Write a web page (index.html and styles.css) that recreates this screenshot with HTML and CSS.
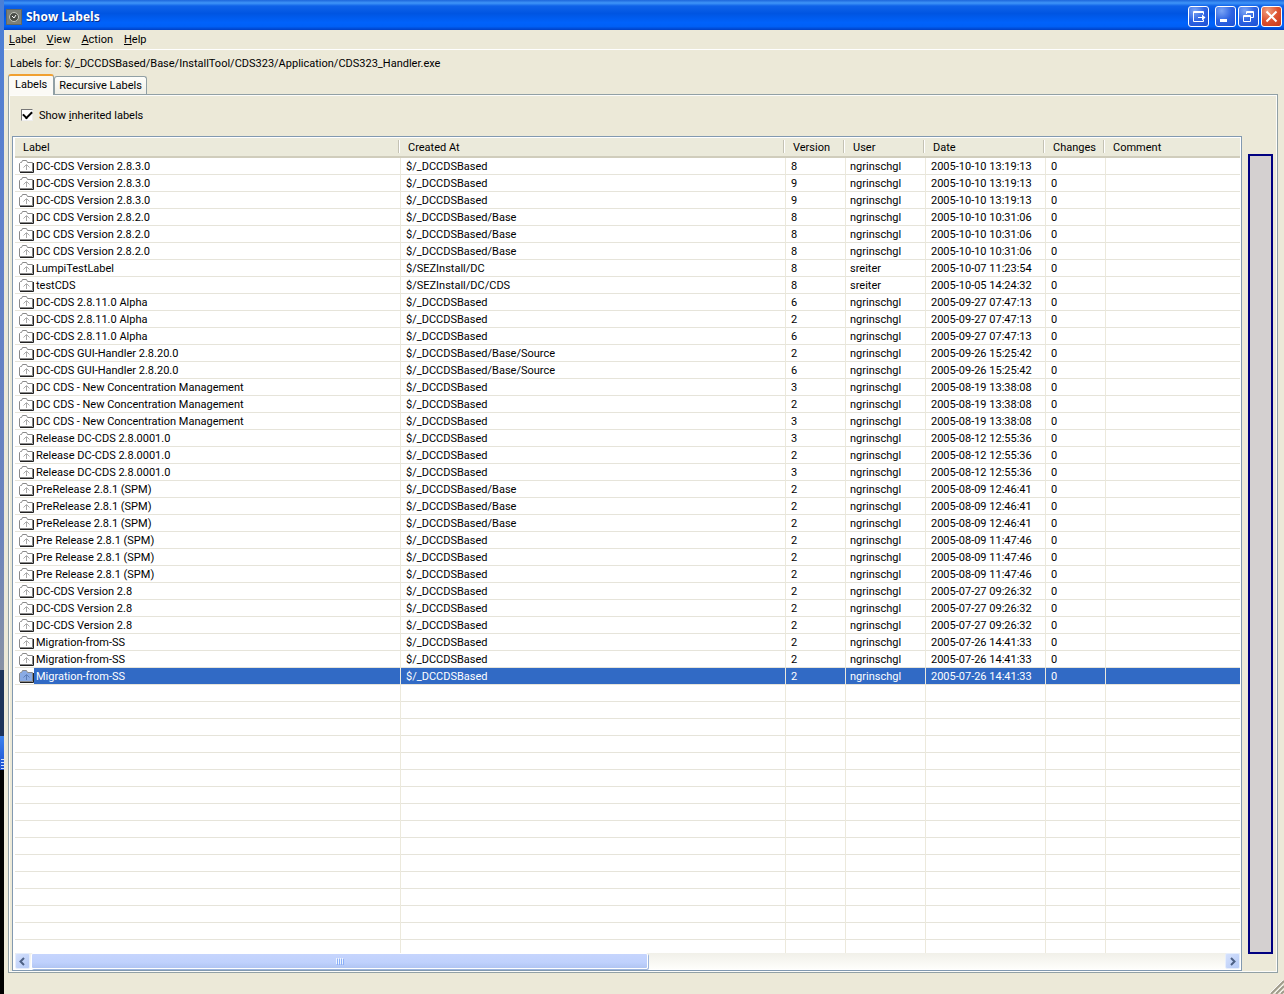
FILE: index.html
```
<!DOCTYPE html>
<html lang="en">
<head>
<meta charset="utf-8">
<title>Show Labels</title>
<link rel="stylesheet" href="styles.css">
</head>
<body>
<svg class="defs" aria-hidden="true">
  <symbol id="folder" viewBox="0 0 15 13">
    <path class="folder-shape" d="M.5 11.5v-8l1-1h1l1-2h4l1 2h5v9z"/>
    <path class="folder-edge" d="M14.5 3v9.500H1"/>
    <path class="folder-arrow" d="M7.500 10V5M4.500 7.500l3-3 3 3"/>
  </symbol>
</svg>
<div class="desktop">
  <div class="wallpaper"><div class="sky"></div><div class="sea"></div><div class="taskbar"></div><div class="dark"></div></div>
  <main class="window">
    <header class="titlebar">
      <svg class="app-icon" viewBox="0 0 16 16"><path fill="#7d8078" d="M0 0h16v16H0z"/><path d="M.5 .5h15v15H.5z" fill="none" stroke="#4c5148" stroke-dasharray="1 1"/><circle cx="8" cy="8" r="4.500" fill="#4a4e48" stroke="#c3c6be"/><path d="M6 7l2 2 2-3" stroke="#fff"/></svg>
      <h1>Show Labels</h1>
      <button class="cap spaced" type="button" aria-label="Move window"><svg viewBox="0 0 19 19"><path d="M14.500 7.500V4.500h-10v10h10V12.500M4 5.500h11M9 10.500h6"/><path class="solid" d="M13 7.500l3.500 3-3.500 3z"/></svg></button>
      <button class="cap" type="button" aria-label="Minimize"><svg viewBox="0 0 19 19"><path class="thick" d="M4 13.500h7"/></svg></button>
      <button class="cap" type="button" aria-label="Restore"><svg viewBox="0 0 19 19"><path d="M7.500 7V4.500h7v6H12M7 5.500h8M4.500 8.500h7v6h-7zM4 9.500h8"/></svg></button>
      <button class="cap close" type="button" aria-label="Close"><svg viewBox="0 0 19 19"><path class="cross" d="M4.500 4.500l10 10M14.500 4.500l-10 10"/></svg></button>
    </header>
    <nav class="menu">
      <button type="button"><u>L</u>abel</button>
      <button type="button"><u>V</u>iew</button>
      <button type="button"><u>A</u>ction</button>
      <button type="button"><u>H</u>elp</button>
    </nav>
    <p class="path">Labels for: $/_DCCDSBased/Base/InstallTool/CDS323/Application/CDS323_Handler.exe</p>
    <div class="tabs" role="tablist">
      <button type="button" role="tab" class="tab active" aria-selected="true">Labels</button>
      <button type="button" role="tab" class="tab" aria-selected="false">Recursive Labels</button>
    </div>
    <section class="panel">
      <label class="inherit"><input type="checkbox" checked><span>Show <u>i</u>nherited labels</span></label>
      <div class="content">
        <div class="list">
          <div class="rows">
          <table>
            <colgroup><col class="c-label"><col class="c-created"><col class="c-version"><col class="c-user"><col class="c-date"><col class="c-changes"><col></colgroup>
            <thead><tr><th>Label</th><th>Created At</th><th>Version</th><th>User</th><th>Date</th><th>Changes</th><th>Comment</th></tr></thead>
            <tbody>
<tr><td><svg><use href="#folder"/></svg><span>DC-CDS Version 2.8.3.0</span></td><td>$/_DCCDSBased</td><td>8</td><td>ngrinschgl</td><td>2005-10-10 13:19:13</td><td>0</td><td></td></tr>
<tr><td><svg><use href="#folder"/></svg><span>DC-CDS Version 2.8.3.0</span></td><td>$/_DCCDSBased</td><td>9</td><td>ngrinschgl</td><td>2005-10-10 13:19:13</td><td>0</td><td></td></tr>
<tr><td><svg><use href="#folder"/></svg><span>DC-CDS Version 2.8.3.0</span></td><td>$/_DCCDSBased</td><td>9</td><td>ngrinschgl</td><td>2005-10-10 13:19:13</td><td>0</td><td></td></tr>
<tr><td><svg><use href="#folder"/></svg><span>DC CDS Version 2.8.2.0</span></td><td>$/_DCCDSBased/Base</td><td>8</td><td>ngrinschgl</td><td>2005-10-10 10:31:06</td><td>0</td><td></td></tr>
<tr><td><svg><use href="#folder"/></svg><span>DC CDS Version 2.8.2.0</span></td><td>$/_DCCDSBased/Base</td><td>8</td><td>ngrinschgl</td><td>2005-10-10 10:31:06</td><td>0</td><td></td></tr>
<tr><td><svg><use href="#folder"/></svg><span>DC CDS Version 2.8.2.0</span></td><td>$/_DCCDSBased/Base</td><td>8</td><td>ngrinschgl</td><td>2005-10-10 10:31:06</td><td>0</td><td></td></tr>
<tr><td><svg><use href="#folder"/></svg><span>LumpiTestLabel</span></td><td>$/SEZInstall/DC</td><td>8</td><td>sreiter</td><td>2005-10-07 11:23:54</td><td>0</td><td></td></tr>
<tr><td><svg><use href="#folder"/></svg><span>testCDS</span></td><td>$/SEZInstall/DC/CDS</td><td>8</td><td>sreiter</td><td>2005-10-05 14:24:32</td><td>0</td><td></td></tr>
<tr><td><svg><use href="#folder"/></svg><span>DC-CDS 2.8.11.0 Alpha</span></td><td>$/_DCCDSBased</td><td>6</td><td>ngrinschgl</td><td>2005-09-27 07:47:13</td><td>0</td><td></td></tr>
<tr><td><svg><use href="#folder"/></svg><span>DC-CDS 2.8.11.0 Alpha</span></td><td>$/_DCCDSBased</td><td>2</td><td>ngrinschgl</td><td>2005-09-27 07:47:13</td><td>0</td><td></td></tr>
<tr><td><svg><use href="#folder"/></svg><span>DC-CDS 2.8.11.0 Alpha</span></td><td>$/_DCCDSBased</td><td>6</td><td>ngrinschgl</td><td>2005-09-27 07:47:13</td><td>0</td><td></td></tr>
<tr><td><svg><use href="#folder"/></svg><span>DC-CDS GUI-Handler 2.8.20.0</span></td><td>$/_DCCDSBased/Base/Source</td><td>2</td><td>ngrinschgl</td><td>2005-09-26 15:25:42</td><td>0</td><td></td></tr>
<tr><td><svg><use href="#folder"/></svg><span>DC-CDS GUI-Handler 2.8.20.0</span></td><td>$/_DCCDSBased/Base/Source</td><td>6</td><td>ngrinschgl</td><td>2005-09-26 15:25:42</td><td>0</td><td></td></tr>
<tr><td><svg><use href="#folder"/></svg><span>DC CDS - New Concentration Management</span></td><td>$/_DCCDSBased</td><td>3</td><td>ngrinschgl</td><td>2005-08-19 13:38:08</td><td>0</td><td></td></tr>
<tr><td><svg><use href="#folder"/></svg><span>DC CDS - New Concentration Management</span></td><td>$/_DCCDSBased</td><td>2</td><td>ngrinschgl</td><td>2005-08-19 13:38:08</td><td>0</td><td></td></tr>
<tr><td><svg><use href="#folder"/></svg><span>DC CDS - New Concentration Management</span></td><td>$/_DCCDSBased</td><td>3</td><td>ngrinschgl</td><td>2005-08-19 13:38:08</td><td>0</td><td></td></tr>
<tr><td><svg><use href="#folder"/></svg><span>Release DC-CDS 2.8.0001.0</span></td><td>$/_DCCDSBased</td><td>3</td><td>ngrinschgl</td><td>2005-08-12 12:55:36</td><td>0</td><td></td></tr>
<tr><td><svg><use href="#folder"/></svg><span>Release DC-CDS 2.8.0001.0</span></td><td>$/_DCCDSBased</td><td>2</td><td>ngrinschgl</td><td>2005-08-12 12:55:36</td><td>0</td><td></td></tr>
<tr><td><svg><use href="#folder"/></svg><span>Release DC-CDS 2.8.0001.0</span></td><td>$/_DCCDSBased</td><td>3</td><td>ngrinschgl</td><td>2005-08-12 12:55:36</td><td>0</td><td></td></tr>
<tr><td><svg><use href="#folder"/></svg><span>PreRelease 2.8.1 (SPM)</span></td><td>$/_DCCDSBased/Base</td><td>2</td><td>ngrinschgl</td><td>2005-08-09 12:46:41</td><td>0</td><td></td></tr>
<tr><td><svg><use href="#folder"/></svg><span>PreRelease 2.8.1 (SPM)</span></td><td>$/_DCCDSBased/Base</td><td>2</td><td>ngrinschgl</td><td>2005-08-09 12:46:41</td><td>0</td><td></td></tr>
<tr><td><svg><use href="#folder"/></svg><span>PreRelease 2.8.1 (SPM)</span></td><td>$/_DCCDSBased/Base</td><td>2</td><td>ngrinschgl</td><td>2005-08-09 12:46:41</td><td>0</td><td></td></tr>
<tr><td><svg><use href="#folder"/></svg><span>Pre Release 2.8.1 (SPM)</span></td><td>$/_DCCDSBased</td><td>2</td><td>ngrinschgl</td><td>2005-08-09 11:47:46</td><td>0</td><td></td></tr>
<tr><td><svg><use href="#folder"/></svg><span>Pre Release 2.8.1 (SPM)</span></td><td>$/_DCCDSBased</td><td>2</td><td>ngrinschgl</td><td>2005-08-09 11:47:46</td><td>0</td><td></td></tr>
<tr><td><svg><use href="#folder"/></svg><span>Pre Release 2.8.1 (SPM)</span></td><td>$/_DCCDSBased</td><td>2</td><td>ngrinschgl</td><td>2005-08-09 11:47:46</td><td>0</td><td></td></tr>
<tr><td><svg><use href="#folder"/></svg><span>DC-CDS Version 2.8</span></td><td>$/_DCCDSBased</td><td>2</td><td>ngrinschgl</td><td>2005-07-27 09:26:32</td><td>0</td><td></td></tr>
<tr><td><svg><use href="#folder"/></svg><span>DC-CDS Version 2.8</span></td><td>$/_DCCDSBased</td><td>2</td><td>ngrinschgl</td><td>2005-07-27 09:26:32</td><td>0</td><td></td></tr>
<tr><td><svg><use href="#folder"/></svg><span>DC-CDS Version 2.8</span></td><td>$/_DCCDSBased</td><td>2</td><td>ngrinschgl</td><td>2005-07-27 09:26:32</td><td>0</td><td></td></tr>
<tr><td><svg><use href="#folder"/></svg><span>Migration-from-SS</span></td><td>$/_DCCDSBased</td><td>2</td><td>ngrinschgl</td><td>2005-07-26 14:41:33</td><td>0</td><td></td></tr>
<tr><td><svg><use href="#folder"/></svg><span>Migration-from-SS</span></td><td>$/_DCCDSBased</td><td>2</td><td>ngrinschgl</td><td>2005-07-26 14:41:33</td><td>0</td><td></td></tr>
<tr class="selected"><td><svg><use href="#folder"/></svg><span>Migration-from-SS</span></td><td>$/_DCCDSBased</td><td>2</td><td>ngrinschgl</td><td>2005-07-26 14:41:33</td><td>0</td><td></td></tr>
<tr class="filler"><td></td><td></td><td></td><td></td><td></td><td></td><td></td></tr>
            </tbody>
          </table>
          </div>
          <div class="scrollbar">
            <button type="button" class="arrow" aria-label="Scroll left"><svg viewBox="0 0 13 13"><path d="M8 3L4.500 6.500 8 10"/></svg></button>
            <div class="track"><div class="thumb"><i></i><i></i><i></i><i></i></div></div>
            <button type="button" class="arrow" aria-label="Scroll right"><svg viewBox="0 0 13 13"><path d="M5 3l3.500 3.500L5 10"/></svg></button>
          </div>
        </div>
        <div class="gauge"></div>
      </div>
    </section>
    <footer class="status"><svg viewBox="0 0 14 14"><path stroke="#fff" d="M0 13L13 0M5 13l8-8M10 13l3-3"/><path stroke="#a09c8c" stroke-width="2" d="M1 14L14 1M6 14l8-8M11 14l3-3"/></svg></footer>
  </main>
</div>
</body>
</html>
```
FILE: styles.css
```
* { box-sizing: border-box; }
body {
  margin: 0;
  font: 11px/16px Roboto, "Liberation Sans", sans-serif;
  color: #000;
}
button { font: inherit; color: inherit; margin: 0; padding: 0; border: 0; background: none; }
svg { display: block; fill: none; }
.defs { display: none; }
.desktop { display: flex; min-height: 100vh; }

.wallpaper { width: 4px; display: flex; flex-direction: column; }
.sky { flex: 670; background: linear-gradient(#4a7fd6, #5f80cc 30%, #6b83bc 80%, #8791a4); }
.sea { flex: 66; background: #1c3359; }
.taskbar {
  flex: 34;
  background: repeating-linear-gradient(#cfe0ff 0 1px, transparent 1px 3px) bottom / 3px 11px no-repeat,
    linear-gradient(#3c83ee, #1c50d0);
}
.dark { flex: 224; background: #000; }

.window { flex: 1; min-width: 0; display: flex; flex-direction: column; background: #ece9d8; }
.titlebar {
  display: flex; align-items: center; gap: 2px; height: 30px; padding: 3px 2px 0 2px;
  background: linear-gradient(#1d66dc, #3f95f8 10%, #0f62e8 20%, #0055e2 45%, #0062fb 75%, #0060f6 88%, #0040c4);
}
.app-icon { width: 16px; height: 16px; }
.titlebar h1 {
  flex: 1; margin: 0 0 0 2px; color: #fff; text-shadow: 1px 1px #0a2f8c;
  font: bold 12px/16px "Open Sans", sans-serif;
}
.cap {
  width: 21px; height: 21px; border: 1px solid #fff; border-radius: 3px;
  background: radial-gradient(circle at 30% 20%, #7ba5f5, #2d63e2 50%, #1c4fd4);
}
.cap svg { width: 19px; height: 19px; stroke: #fff; }
.spaced { margin-right: 4px; }
.close { background: radial-gradient(circle at 30% 20%, #f0a080, #dd5230 50%, #c8381a); }
.cap .solid { fill: #fff; stroke: none; }
.thick { stroke-width: 3; }
.cross { stroke-width: 2; }

.menu {
  display: flex; gap: 11px; height: 20px; padding: 0 5px;
  border-bottom: 1px solid #fff;
}
.path { margin: 0; padding: 6px 6px 0; height: 24px; }

.tabs { display: flex; align-items: flex-end; padding-left: 4px; height: 20px; }
.tab {
  height: 18px; padding: 1px 4px 0; border: 1px solid #91a0a5; border-bottom: 0;
  border-radius: 3px 3px 0 0; background: linear-gradient(#fefefb, #f0efe6);
}
.tab.active {
  position: relative; height: 21px; margin-bottom: -1px; padding: 0 6px 2px;
  border-top: 2px solid #f0a030; background: #fbfaf6;
}
.panel {
  flex: 1; display: flex; flex-direction: column; margin: 0 6px 0 4px; padding: 0 4px 1px 3px;
  border: 1px solid #91a0a5; box-shadow: inset 0 0 0 1px #fcfcfa;
}
.inherit { display: flex; align-items: center; gap: 6px; height: 40px; padding-left: 9px; align-self: flex-start; }
.inherit span { padding-top: 1px; }
.inherit input {
  appearance: none; width: 12px; height: 12px; margin: 0; background: #fff;
  border: 1px solid #777; border-right-color: #eee; border-bottom-color: #eee;
  display: grid; place-items: center;
}
.inherit input:checked::after {
  content: ""; width: 7px; height: 4px; border: solid #000; border-width: 0 0 2px 2px; rotate: -45deg; margin-bottom: 2px;
}
.content { flex: 1; display: flex; gap: 6px; }
.list {
  flex: 1; min-width: 0; margin-top: 1px; display: flex; flex-direction: column; padding: 1px 1px 1px 2px;
  border: 1px solid #8299b0; background: #fff;
}
.rows { flex: 1; display: grid; }
table { width: 100%; height: 100%; table-layout: fixed; border-collapse: separate; border-spacing: 0; }
.c-label { width: 386px; }
.c-created { width: 385px; }
.c-version, .c-changes { width: 60px; }
.c-user { width: 80px; }
.c-date { width: 120px; }
th {
  height: 20px; padding: 2px 0 0 7px; font-weight: normal; line-height: 16px; text-align: left;
  border-bottom: 2px solid #d0cdbc;
  background: linear-gradient(#c4c2b4, #c4c2b4) calc(100% - 2px) 2px / 1px 13px no-repeat,
    linear-gradient(#fff, #fff) calc(100% - 1px) 2px / 1px 13px no-repeat, #ebeadb;
}
th:first-child { padding-left: 8px; }
th:last-child { background: #ebeadb; }
td {
  height: 17px; padding: 2px 0 0 5px; line-height: 14px; white-space: nowrap;
  border-right: 1px solid #ece9dc; border-bottom: 1px solid #e6e4da;
}
td:nth-child(4) { padding-left: 4px; }
td:last-child { border-right: 0; }
td:first-child { padding: 0 0 0 4px; }
td svg { float: left; width: 15px; height: 13px; margin-top: 2px; }
td span { display: block; margin-left: 15px; padding: 2px 0 0 2px; }
.folder-shape { fill: var(--folder-fill, #fff); stroke: #8a8a8a; }
.folder-edge { stroke: #222; }
.folder-arrow { stroke: var(--folder-mark, #aaa); }
.selected { --folder-fill: #8aabe4; --folder-mark: #5d7eb8; }
.selected td { color: #fff; background: #316ac5; background-clip: padding-box; }
.selected td:first-child { background: #fff; }
.selected span { background: #316ac5; }
.filler td {
  height: auto; border-bottom: 0;
  background: repeating-linear-gradient(transparent 0 16px, #e6e4da 16px 17px);
}

.scrollbar { display: flex; height: 16px; background: linear-gradient(#f1f0e9, #fefefb); }
.arrow {
  width: 15px; height: 16px; border: 1px solid #e6eefc; border-radius: 2px;
  background: linear-gradient(135deg, #d5e1fd, #b5caf6);
}
.arrow svg { width: 13px; height: 13px; stroke: #4d6185; stroke-width: 2; }
.track { flex: 1; padding: 0 1px; }
.thumb {
  display: flex; justify-content: center; align-items: center; gap: 1px;
  width: calc(52% - 3px); height: 16px; border: 1px solid #fff; border-radius: 2px;
  background: linear-gradient(#c6d5fd, #bfd1fd 60%, #b1c5f2);
  box-shadow: 1px 1px #9db5dc;
}
.thumb i { width: 1px; height: 6px; background: #eef4fe; box-shadow: 1px 1px #8cb0f8; }
.gauge { width: 25px; margin: 19px 0 17px; border: 2px solid #000080; background: #d4d0d0; }
.status { display: flex; align-items: flex-end; justify-content: flex-end; height: 21px; }
.status svg { width: 14px; height: 14px; }
```
